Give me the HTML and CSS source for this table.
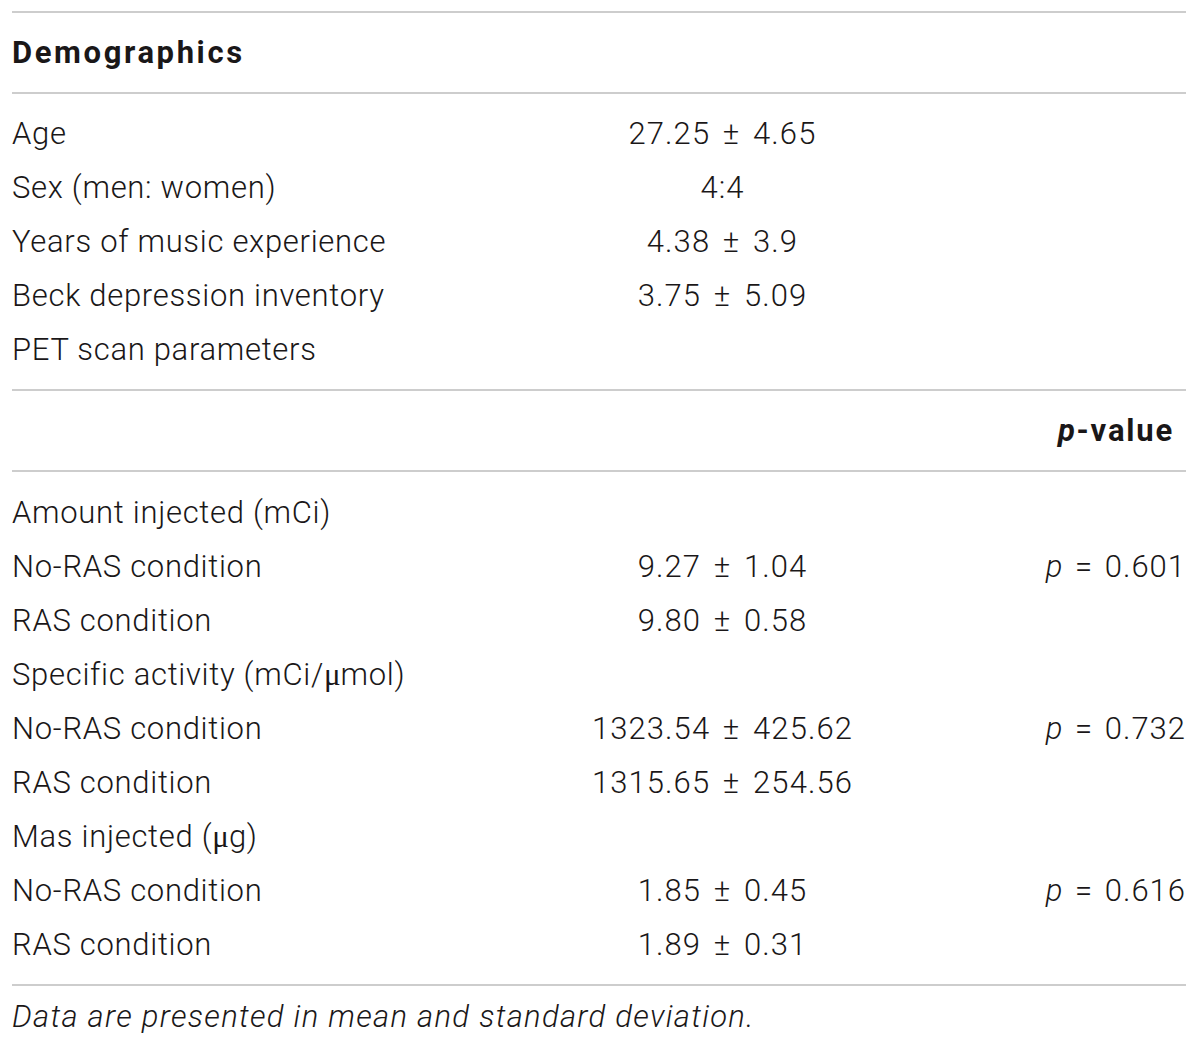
FILE: index.html
```html
<!DOCTYPE html>
<html lang="en">
<head>
<meta charset="utf-8">
<title>Demographics and PET scan parameters</title>
<link rel="stylesheet" href="styles.css">
</head>
<body>
<div class="table">
  <div class="rule"></div>
  <div class="row head">
    <div class="c1 bold">Demographics</div>
    <div class="c2"></div>
    <div class="c3"></div>
  </div>
  <div class="rule"></div>
  <div class="section s1">
    <div class="row"><div class="c1">Age</div><div class="c2">27.25 ± 4.65</div><div class="c3"></div></div>
    <div class="row"><div class="c1">Sex (men: women)</div><div class="c2">4:4</div><div class="c3"></div></div>
    <div class="row"><div class="c1">Years of music experience</div><div class="c2">4.38 ± 3.9</div><div class="c3"></div></div>
    <div class="row"><div class="c1">Beck depression inventory</div><div class="c2">3.75 ± 5.09</div><div class="c3"></div></div>
    <div class="row"><div class="c1">PET scan parameters</div><div class="c2"></div><div class="c3"></div></div>
  </div>
  <div class="rule"></div>
  <div class="row head">
    <div class="c1"></div>
    <div class="c2"></div>
    <div class="c3 bold pad"><i>p</i>-value</div>
  </div>
  <div class="rule"></div>
  <div class="section s2">
    <div class="row"><div class="c1">Amount injected (mCi)</div><div class="c2"></div><div class="c3"></div></div>
    <div class="row"><div class="c1">No-RAS condition</div><div class="c2">9.27 ± 1.04</div><div class="c3"><i>p</i> = 0.601</div></div>
    <div class="row"><div class="c1">RAS condition</div><div class="c2">9.80 ± 0.58</div><div class="c3"></div></div>
    <div class="row"><div class="c1">Specific activity (mCi/<span class="mu">μ</span>mol)</div><div class="c2"></div><div class="c3"></div></div>
    <div class="row"><div class="c1">No-RAS condition</div><div class="c2">1323.54 ± 425.62</div><div class="c3"><i>p</i> = 0.732</div></div>
    <div class="row"><div class="c1">RAS condition</div><div class="c2">1315.65 ± 254.56</div><div class="c3"></div></div>
    <div class="row"><div class="c1">Mas injected (<span class="mu">μ</span>g)</div><div class="c2"></div><div class="c3"></div></div>
    <div class="row"><div class="c1">No-RAS condition</div><div class="c2">1.85 ± 0.45</div><div class="c3"><i>p</i> = 0.616</div></div>
    <div class="row"><div class="c1">RAS condition</div><div class="c2">1.89 ± 0.31</div><div class="c3"></div></div>
  </div>
  <div class="rule"></div>
  <div class="foot">Data are presented in mean and standard deviation.</div>
</div>
</body>
</html>
```

FILE: styles.css
```css
html, body {
  margin: 0;
  padding: 0;
  background: #ffffff;
}

body {
  font-family: Roboto, "Liberation Sans", Arial, sans-serif;
  font-weight: 300;
  font-size: 31px;
  letter-spacing: 0.7px;
  color: #1a1718;
}

.table {
  width: 1174px;
  padding: 11px 12px 0;
}

.rule {
  height: 2px;
  background: #cdcdcd;
}

.row {
  display: grid;
  grid-template-columns: 433px 555px 1fr;
  height: 54px;
  line-height: 54px;
  align-items: center;
  white-space: nowrap;
}

.row.head {
  height: 79px;
  line-height: 79px;
}

.c2 {
  text-align: center;
  letter-spacing: 1.1px;
  word-spacing: 4px;
}

.c3 {
  text-align: right;
  letter-spacing: 1px;
  word-spacing: 3px;
}

.bold {
  font-weight: 700;
  font-size: 31px;
  letter-spacing: 2.6px;
}

.c3.bold {
  letter-spacing: 1.8px;
  word-spacing: 0;
}

.pad {
  padding-right: 12px;
}

.section.s1 {
  padding: 13px 0 12px;
}

.section.s2 {
  padding: 14px 0 12px;
}

.mu {
  font-family: "Liberation Serif", serif;
  font-weight: 400;
  letter-spacing: 0;
}

.foot {
  height: 62px;
  line-height: 62px;
  font-style: italic;
  letter-spacing: 1.3px;
}
```
